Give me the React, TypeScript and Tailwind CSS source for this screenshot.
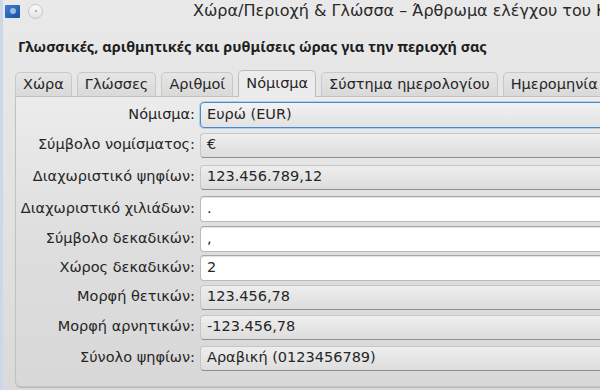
import React from 'react';

type Row = {
  label: string;
  value: string;
  kind: 'combo' | 'focus' | 'edit';
  mt: string;
};

const rows: Row[] = [
  { label: 'Νόμισμα:', value: 'Ευρώ (EUR)', kind: 'focus', mt: 'mt-0' },
  { label: 'Σύμβολο νομίσματος:', value: '€', kind: 'combo', mt: 'mt-[4px]' },
  { label: 'Διαχωριστικό ψηφίων:', value: '123.456.789,12', kind: 'combo', mt: 'mt-[6px]' },
  { label: 'Διαχωριστικό χιλιάδων:', value: '.', kind: 'edit', mt: 'mt-[6px]' },
  { label: 'Σύμβολο δεκαδικών:', value: ',', kind: 'edit', mt: 'mt-[4px]' },
  { label: 'Χώρος δεκαδικών:', value: '2', kind: 'edit', mt: 'mt-[3px]' },
  { label: 'Μορφή θετικών:', value: '123.456,78', kind: 'combo', mt: 'mt-[3px]' },
  { label: 'Μορφή αρνητικών:', value: '-123.456,78', kind: 'combo', mt: 'mt-[4px]' },
  { label: 'Σύνολο ψηφίων:', value: 'Αραβική (0123456789)', kind: 'combo', mt: 'mt-[5px]' },
];

const tabs = ['Χώρα', 'Γλώσσες', 'Αριθμοί', 'Νόμισμα', 'Σύστημα ημερολογίου', 'Ημερομηνία'];

const Field = ({ row }: { row: Row }) => {
  if (row.kind === 'focus') {
    return (
      <div className="flex-1 h-[26px] rounded-[4px] border border-[#4a89d0] bg-gradient-to-b from-[#f2f2f2] to-[#e2e2e2] shadow-[0_0_0_1px_rgba(120,170,230,0.45)] flex items-center pl-[6px]">
        {row.value}
      </div>
    );
  }
  if (row.kind === 'combo') {
    return (
      <div className="flex-1 h-[25px] rounded-[4px] border border-[#c6c6c6] border-b-[#8f8f8f] bg-gradient-to-b from-[#eeeeee] to-[#dddddd] flex items-center pl-[6px]">
        {row.value}
      </div>
    );
  }
  return (
    <div className="flex-1 h-[26px] rounded-[4px] border border-[#bababa] border-t-[#a6a6a6] bg-white shadow-[inset_0_1px_1px_rgba(0,0,0,0.12)] flex items-center pl-[6px]">
      {row.value}
    </div>
  );
};

const App = () => {
  return (
    <div className="w-[600px] h-[390px] overflow-hidden relative bg-gradient-to-b from-[#e9e9e9] via-[#e3e3e3] to-[#dadada] text-[#262626] font-['DejaVu_Sans',sans-serif] text-[14.5px]">
      <div className="absolute left-0 top-0 bottom-0 w-[3px] bg-[#c9d9ea]" />

      {/* title bar */}
      <div className="h-[22px] flex items-center pl-[5px] overflow-hidden">
        <div className="shrink-0 w-[15px] h-[13px] bg-gradient-to-br from-[#3d7fd6] to-[#1c4f9e] rounded-[1px] flex items-center justify-center">
          <div className="w-[6px] h-[6px] rounded-full bg-[#c8dcf5] opacity-70" />
        </div>
        <div className="shrink-0 ml-[8px] w-[15px] h-[15px] rounded-full border border-[#c4c4c4] bg-gradient-to-b from-[#fbfbfb] to-[#e2e2e2] flex items-center justify-center">
          <div className="w-[2px] h-[2px] rounded-full bg-[#999]" />
        </div>
        <div className="shrink-0 ml-[150px] whitespace-nowrap text-[16px] text-[#2a2a2a]">
          Χώρα/Περιοχή &amp; Γλώσσα – Άρθρωμα ελέγχου του KDE
        </div>
      </div>

      {/* heading */}
      <div className="pl-[18px] pt-[14px] h-[48px] font-['Noto_Sans',sans-serif] font-bold text-[14.5px] text-[#1e1e1e] whitespace-nowrap">
        Γλωσσικές, αριθμητικές και ρυθμίσεις ώρας για την περιοχή σας
      </div>

      {/* tabs */}
      <div className="flex items-end pl-[15px] h-[26px] gap-[5px] whitespace-nowrap">
        {tabs.map((t) =>
          t === 'Νόμισμα' ? (
            <div
              key={t}
              className="shrink-0 relative z-10 h-[27px] -mb-[1px] px-[7px] flex items-center rounded-t-[5px] border border-b-0 border-[#bdbdbd] bg-[#ececec]"
            >
              {t}
            </div>
          ) : (
            <div
              key={t}
              className="shrink-0 h-[24px] px-[7px] flex items-center rounded-t-[5px] border border-b-0 border-[#c8c8c8] bg-gradient-to-b from-[#e6e6e6] to-[#d9d9d9]"
            >
              {t}
            </div>
          )
        )}
      </div>

      {/* panel */}
      <div className="ml-[15px] w-[620px] h-[291px] rounded-bl-[6px] border border-[#c2c2c2] bg-gradient-to-b from-[#ececec] via-[#dedede] to-[#d8d8d8] shadow-[0_1px_1px_rgba(0,0,0,0.15)] pt-[5px] flex flex-col">
        {rows.map((r) => (
          <div key={r.label} className={`flex items-center h-[26px] ${r.mt}`}>
            <div className="w-[184px] text-right pr-[5px] whitespace-nowrap">{r.label}</div>
            <Field row={r} />
          </div>
        ))}
      </div>
    </div>
  );
};

export default App;
